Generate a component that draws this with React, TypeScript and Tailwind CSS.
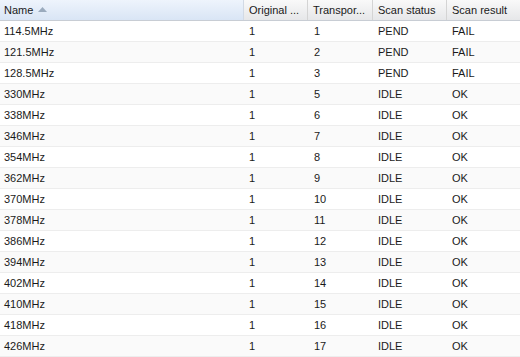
const rows: [string, string, string, string, string][] = [
  ['114.5MHz', '1', '1', 'PEND', 'FAIL'],
  ['121.5MHz', '1', '2', 'PEND', 'FAIL'],
  ['128.5MHz', '1', '3', 'PEND', 'FAIL'],
  ['330MHz', '1', '5', 'IDLE', 'OK'],
  ['338MHz', '1', '6', 'IDLE', 'OK'],
  ['346MHz', '1', '7', 'IDLE', 'OK'],
  ['354MHz', '1', '8', 'IDLE', 'OK'],
  ['362MHz', '1', '9', 'IDLE', 'OK'],
  ['370MHz', '1', '10', 'IDLE', 'OK'],
  ['378MHz', '1', '11', 'IDLE', 'OK'],
  ['386MHz', '1', '12', 'IDLE', 'OK'],
  ['394MHz', '1', '13', 'IDLE', 'OK'],
  ['402MHz', '1', '14', 'IDLE', 'OK'],
  ['410MHz', '1', '15', 'IDLE', 'OK'],
  ['418MHz', '1', '16', 'IDLE', 'OK'],
  ['426MHz', '1', '17', 'IDLE', 'OK'],
];

const cols = 'grid grid-cols-[244px_64px_65px_74px_73px]';

export default function App() {
  return (
    <div className="w-[520px] h-[357px] overflow-hidden bg-white text-[11px] text-[#1a1a1a] font-['Liberation_Sans',Arial,sans-serif]">
      <div className={`${cols} h-[21px] border-b border-[#c8cdd4]`}>
        <div className="flex items-center gap-[5px] pl-[4px] border-r border-[#d2dae5] bg-gradient-to-b from-[#eef4fc] to-[#d9e5f5]">
          <span>Name</span>
          <svg width="9" height="5" viewBox="0 0 9 5" className="mt-[-1px]">
            <path d="M0 5 L4.5 0 L9 5 Z" fill="#9aaabd" />
          </svg>
        </div>
        <div className="flex items-center pl-[5px] border-r border-[#d4d4d4] bg-gradient-to-b from-[#f9f9f9] to-[#e6e7e9]">Original ...</div>
        <div className="flex items-center pl-[5px] border-r border-[#d4d4d4] bg-gradient-to-b from-[#f9f9f9] to-[#e6e7e9]">Transpor...</div>
        <div className="flex items-center pl-[5px] border-r border-[#d4d4d4] bg-gradient-to-b from-[#f9f9f9] to-[#e6e7e9]">Scan status</div>
        <div className="flex items-center pl-[5px] bg-gradient-to-b from-[#f9f9f9] to-[#e6e7e9]">Scan result</div>
      </div>
      {rows.map((r, i) => (
        <div
          key={r[0]}
          className={`${cols} h-[21px] border-b border-[#ededed] ${i % 2 === 1 ? 'bg-[#fafafa]' : 'bg-white'}`}
        >
          <div className="flex items-center pl-[4px]">{r[0]}</div>
          <div className="flex items-center pl-[5px]">{r[1]}</div>
          <div className="flex items-center pl-[6px]">{r[2]}</div>
          <div className="flex items-center pl-[5px]">{r[3]}</div>
          <div className="flex items-center pl-[5px]">{r[4]}</div>
        </div>
      ))}
    </div>
  );
}
